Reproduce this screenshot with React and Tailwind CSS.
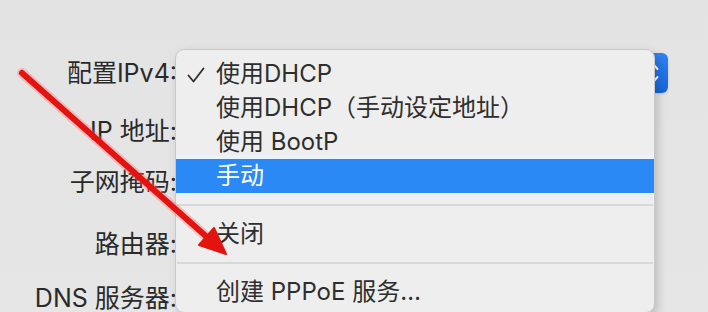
import React from 'react';

const labels = [
  { text: '配置IPv4:', cls: 'mt-0' },
  { text: 'IP 地址:', cls: 'mt-[21px]' },
  { text: '子网掩码:', cls: 'mt-[17px]' },
  { text: '路由器:', cls: 'mt-[28px]' },
  { text: 'DNS 服务器:', cls: 'mt-[20px]' },
];

const MenuRow = ({ children, active, checked }) => (
  <div
    className={`relative flex h-[34px] items-center pl-[40px] ${
      active ? 'bg-[#2a89f4] text-white' : 'text-[#2e2e2e]'
    }`}
  >
    {checked && (
      <svg className="absolute left-[11px] top-[10px] h-[16px] w-[18px]" viewBox="0 0 18 16" fill="none">
        <path d="M1.5 8.5 L6.5 14.5 L16.5 1.5" stroke="#2e2e2e" strokeWidth="1.8" strokeLinecap="round" strokeLinejoin="round" />
      </svg>
    )}
    {children}
  </div>
);

const Separator = () => <div className="mx-[1px] my-[11px] h-[2px] bg-[#d8d8d8]" />;

export default function App() {
  return (
    <div className="relative h-[312px] w-[708px] overflow-hidden bg-gradient-to-b from-[#e3e3e3] to-[#e6e6e6] font-[Inter,'Noto_Sans_CJK_SC',sans-serif] text-[24px] leading-none">
      {/* form rows */}
      <div className="flex flex-col pt-[53px]">
        {labels.map((l, i) => (
          <div key={i} className={`flex items-center ${i === 0 ? 'h-[40px]' : 'h-[34px]'} ${l.cls}`}>
            <div className="w-[178px] pr-[1px] text-right text-[25px] text-[#2a2a2a]">{l.text}</div>
            {i === 0 && (
              <div className="ml-[7px] flex h-[40px] w-[483px] rounded-[6px] bg-[#f4f4f4] shadow-sm">
                <div className="flex-1" />
                <div className="flex w-[28px] items-center justify-center rounded-r-[6px] bg-gradient-to-b from-[#2f82f2] to-[#1565da]">
                  <svg className="h-[22px] w-[10px]" viewBox="0 0 10 22" fill="none">
                    <path d="M1.5 7 L5 3 L8.5 7 M1.5 15 L5 19 L8.5 15" stroke="white" strokeWidth="2" strokeLinecap="round" strokeLinejoin="round" />
                  </svg>
                </div>
              </div>
            )}
          </div>
        ))}
      </div>

      {/* popup menu */}
      <div className="absolute left-[175px] top-[49px] h-[264px] w-[480px] rounded-[9px] border border-[#c9c9c9] bg-[#eeeeee] pt-[7px] shadow-[3px_4px_10px_rgba(0,0,0,0.18)]">
        <MenuRow checked>使用DHCP</MenuRow>
        <MenuRow>使用DHCP（手动设定地址）</MenuRow>
        <MenuRow>使用 BootP</MenuRow>
        <div className="shadow-[0_-4px_0_#e9f3fb,0_6px_0_#eeeff6]">
          <MenuRow active>手动</MenuRow>
        </div>
        <Separator />
        <MenuRow>关闭</MenuRow>
        <Separator />
        <MenuRow>创建 PPPoE 服务…</MenuRow>
      </div>

      {/* red annotation arrow */}
      <svg className="pointer-events-none absolute inset-0 h-[312px] w-[708px]" viewBox="0 0 708 312">
        <line x1="22" y1="73" x2="208" y2="238" stroke="#ff6a6a" strokeOpacity="0.35" strokeWidth="10" strokeLinecap="round" />
        <line x1="22" y1="73" x2="208" y2="238" stroke="#e3140f" strokeWidth="6" strokeLinecap="round" />
        <polygon points="226,254 199,245 214,228" fill="#e3140f" stroke="#e3140f" strokeWidth="2" strokeLinejoin="round" />
      </svg>
    </div>
  );
}
